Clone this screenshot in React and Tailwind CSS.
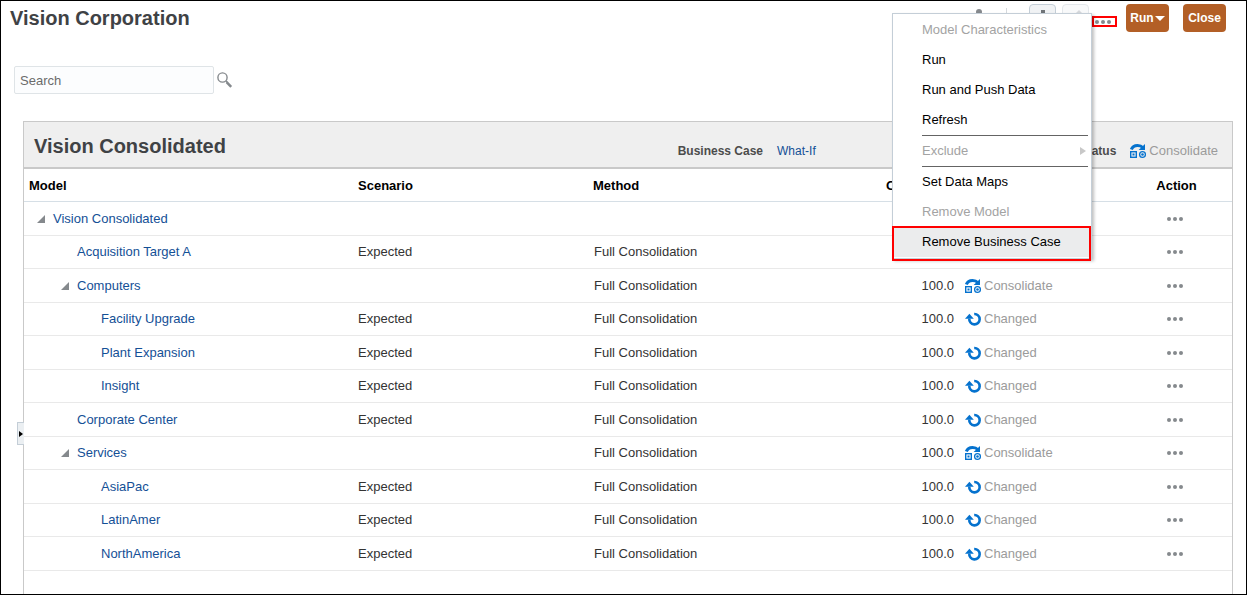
import React, { useState } from 'react';

const models = [
  { name: 'Vision Consolidated', level: 0, parent: true },
  { name: 'Acquisition Target A', level: 1, scenario: 'Expected', method: 'Full Consolidation' },
  { name: 'Computers', level: 1, parent: true, method: 'Full Consolidation', percent: '100.0', status: 'Consolidate' },
  { name: 'Facility Upgrade', level: 2, scenario: 'Expected', method: 'Full Consolidation', percent: '100.0', status: 'Changed' },
  { name: 'Plant Expansion', level: 2, scenario: 'Expected', method: 'Full Consolidation', percent: '100.0', status: 'Changed' },
  { name: 'Insight', level: 2, scenario: 'Expected', method: 'Full Consolidation', percent: '100.0', status: 'Changed' },
  { name: 'Corporate Center', level: 1, scenario: 'Expected', method: 'Full Consolidation', percent: '100.0', status: 'Changed' },
  { name: 'Services', level: 1, parent: true, method: 'Full Consolidation', percent: '100.0', status: 'Consolidate' },
  { name: 'AsiaPac', level: 2, scenario: 'Expected', method: 'Full Consolidation', percent: '100.0', status: 'Changed' },
  { name: 'LatinAmer', level: 2, scenario: 'Expected', method: 'Full Consolidation', percent: '100.0', status: 'Changed' },
  { name: 'NorthAmerica', level: 2, scenario: 'Expected', method: 'Full Consolidation', percent: '100.0', status: 'Changed' },
];

const indents = ['pl-[13px]', 'pl-[37px]', 'pl-[61px]'];

const menuItems = [
  { label: 'Model Characteristics', disabled: true },
  { label: 'Run' },
  { label: 'Run and Push Data' },
  { label: 'Refresh' },
  { label: 'Exclude', disabled: true, submenu: true, divider: true },
  { label: 'Set Data Maps', divider: true },
  { label: 'Remove Model', disabled: true },
  { label: 'Remove Business Case', highlighted: true },
];

const Dots = () => (
  <svg width="16" height="4" viewBox="0 0 16 4" fill="#85898d">
    <circle cx="2" cy="2" r="2" />
    <circle cx="8" cy="2" r="2" />
    <circle cx="14" cy="2" r="2" />
  </svg>
);

const ConsolidateIcon = () => (
  <svg width="16" height="16" viewBox="0 0 16 16" fill="none" stroke="#0572ce" className="shrink-0">
    <path d="M1.4 6.4C2.4 3.6 4.6 2.4 7.6 2.4c2.4 0 3.9.6 5 2" strokeWidth="3" />
    <path d="M15 1v6H8.6z" fill="#0572ce" stroke="none" />
    <rect x="0.7" y="8.7" width="5.6" height="5.6" strokeWidth="1.4" />
    <rect x="2.5" y="10.5" width="2" height="2" fill="#0572ce" stroke="none" />
    <circle cx="12.5" cy="11.5" r="2.9" strokeWidth="1.3" />
    <circle cx="12.5" cy="11.5" r="1.3" fill="#0572ce" stroke="none" />
  </svg>
);

const ChangedIcon = () => (
  <svg width="16" height="16" viewBox="0 0 16 16" fill="none" className="shrink-0">
    <path d="M9.2 3a5.2 5.2 0 1 1-4.9 4.6" stroke="#0572ce" strokeWidth="2.6" />
    <path d="M4.4 2.8L8.8 7.8H0z" fill="#0572ce" />
  </svg>
);

const Status = ({ value }) => (
  <span className="flex items-center gap-[3px] text-[#9b9b9b]">
    {value === 'Consolidate' ? <ConsolidateIcon /> : <ChangedIcon />}
    {value}
  </span>
);

const ActionsMenu = () => (
  <ul
    role="menu"
    className="absolute right-full -top-[3px] z-10 w-[200px] border border-[#c4ced7] bg-white pt-px pb-px shadow-[2px_2px_3px_rgba(0,0,0,0.25)]"
  >
    {menuItems.map((item) => (
      <li key={item.label} role="none" className="relative">
        {item.divider && <hr className="ml-[29px] mr-[3px] border-t border-[#646464]" />}
        <button
          type="button"
          role="menuitem"
          disabled={item.disabled}
          className={`flex h-[30px] w-full items-center justify-between pl-[29px] pr-[5px] text-left ${
            item.disabled ? 'text-[#a3a3a3]' : 'text-black'
          } ${item.highlighted ? 'bg-[#ebeced]' : ''}`}
        >
          {item.label}
          {item.submenu && (
            <svg width="6" height="8" viewBox="0 0 6 8" fill="#c8c8c8">
              <path d="M0 0l6 4-6 4z" />
            </svg>
          )}
        </button>
        {item.highlighted && (
          <span className="pointer-events-none absolute -left-px right-0 -top-px -bottom-1 border-2 border-[#ff0000]" />
        )}
      </li>
    ))}
  </ul>
);

const Toolbar = ({ menuOpen, onToggleMenu }) => (
  <div className="flex items-start">
    <button type="button" aria-label="User" className="mr-[14px] flex h-[27px] w-[27px] justify-center pt-1">
      <svg width="14" height="18" viewBox="0 0 14 18" fill="#85898d">
        <circle cx="7" cy="4" r="3" />
        <path d="M1 17c0-5 2-8 6-8s6 3 6 8z" />
      </svg>
    </button>
    <span className="mr-[22px] mt-1 h-5 w-px bg-[#d5d9dd]" />
    <button
      type="button"
      aria-label="Download"
      className="mr-[6px] flex h-[27px] w-[27px] justify-center rounded-sm border border-[#c4ced7] bg-[#f0f2f4] pt-1"
    >
      <svg width="14" height="16" viewBox="0 0 14 16" fill="#6f7478">
        <path d="M5 1h4v7h4l-6 6-6-6h4z" />
      </svg>
    </button>
    <button
      type="button"
      aria-label="Edit"
      disabled
      className="mr-[3px] flex h-[27px] w-[27px] justify-center rounded-sm border border-[#e3e7eb] bg-[#f8f9fa] pt-1"
    >
      <svg width="16" height="16" viewBox="0 0 16 16" fill="#d5d8db">
        <path d="M11 1l4 4-9 9-5 1 1-5z" />
      </svg>
    </button>
    <div className="relative mr-[9px] mt-3">
      <button
        type="button"
        aria-label="More actions"
        aria-expanded={menuOpen}
        onClick={onToggleMenu}
        className="flex h-[11px] w-[25px] items-center border-2 border-[#ff0000] pl-px"
      >
        <Dots />
      </button>
      {menuOpen && <ActionsMenu />}
    </div>
    <button
      type="button"
      className="mr-[14px] flex h-7 w-[43px] items-center justify-center gap-px rounded-sm bg-[#b35f26] text-xs font-bold text-white"
    >
      Run
      <svg width="10" height="5" viewBox="0 0 10 5" fill="currentColor">
        <path d="M0 0h10L5 5z" />
      </svg>
    </button>
    <button type="button" className="h-7 w-[43px] rounded-sm bg-[#b35f26] text-xs font-bold text-white">
      Close
    </button>
  </div>
);

const ModelTable = () => (
  <table className="w-full table-fixed border-separate border-spacing-0">
    <colgroup>
      <col />
      <col className="w-[235px]" />
      <col className="w-[236px]" />
      <col className="w-[136px]" />
      <col className="w-[162px]" />
      <col className="w-[111px]" />
    </colgroup>
    <thead>
      <tr className="h-[33px] text-left text-black [&>th]:border-b [&>th]:border-[#d6dfe6] [&>th]:pt-px">
        <th className="pl-[5px]">Model</th>
        <th className="pl-[6px]">Scenario</th>
        <th className="pl-[6px]">Method</th>
        <th className="pl-[63px]">Cons %</th>
        <th aria-label="Status" />
        <th className="text-center">Action</th>
      </tr>
    </thead>
    <tbody>
      {models.map((model) => (
        <tr
          key={model.name}
          className="odd:h-[34px] even:h-[33px] [&>td]:border-b [&>td]:border-[#e9e9e9]"
        >
          <td className={indents[model.level]}>
            <div className="flex items-center gap-2">
              {model.parent ? (
                <button type="button" aria-label={`Collapse ${model.name}`} className="w-2">
                  <svg width="8" height="8" viewBox="0 0 8 8" fill="#85898d">
                    <path d="M8 0v8H0z" />
                  </svg>
                </button>
              ) : (
                <span className="w-2" />
              )}
              <a href="#" className="text-[#145096]">
                {model.name}
              </a>
            </div>
          </td>
          <td className="pl-[6px]">{model.scenario}</td>
          <td className="pl-[7px]">{model.method}</td>
          <td className="pr-[5px] text-right">{model.percent}</td>
          <td className="pl-[6px]">{model.status && <Status value={model.status} />}</td>
          <td className="pr-[3px]">
            <button type="button" aria-label={`Actions for ${model.name}`} className="mx-auto block">
              <Dots />
            </button>
          </td>
        </tr>
      ))}
    </tbody>
  </table>
);

const App = () => {
  const [menuOpen, setMenuOpen] = useState(true);
  const [search, setSearch] = useState('');

  return (
    <div className="flex min-h-screen flex-col border border-black bg-white font-['Liberation_Sans',Arial,sans-serif] text-[13px] leading-4 text-[#333]">
      <header className="flex items-start justify-between pl-[9px] pr-5 pt-[3px]">
        <h1 className="text-xl font-bold text-[#3f4245]">Vision Corporation</h1>
        <Toolbar menuOpen={menuOpen} onToggleMenu={() => setMenuOpen(!menuOpen)} />
      </header>

      <form className="mt-[34px] flex items-center gap-[3px] pl-[13px]" onSubmit={(e) => e.preventDefault()}>
        <input
          type="text"
          aria-label="Search"
          placeholder="Search"
          value={search}
          onChange={(e) => setSearch(e.target.value)}
          className="h-7 w-[200px] rounded-xs border border-[#dfe4e7] bg-[#fcfdfe] px-[5px] placeholder:text-[#6b6b6b]"
        />
        <button type="submit" aria-label="Search models">
          <svg width="16" height="16" viewBox="0 0 16 16" fill="none" stroke="#85898d">
            <circle cx="5.5" cy="5.5" r="4.6" strokeWidth="1.4" />
            <path d="M9 9l1.5 1.5" strokeWidth="1.4" />
            <path d="M9.6 10.2l4.6 4.6" strokeWidth="2.6" />
          </svg>
        </button>
      </form>

      <main className="relative ml-[22px] mr-[13px] mt-[27px] flex-1 border border-b-0 border-[#c9c9c9]">
        <button
          type="button"
          aria-label="Expand panel"
          className="absolute right-full top-[300px] flex h-[23px] w-[7px] items-center justify-center border border-r-0 border-[#c4ced7] bg-[#ebeff2]"
        >
          <svg width="4" height="6" viewBox="0 0 4 6" fill="#000" className="shrink-0">
            <path d="M0 0l4 3-4 3z" />
          </svg>
        </button>

        <div className="flex h-[47px] items-center justify-between border-b-2 border-[#c9c9c9] bg-[#efefef] pl-[10px] pr-[14px] pt-[2px]">
          <h2 className="text-xl font-bold text-[#3f4245]">Vision Consolidated</h2>
          <div className="flex pt-[10px] text-xs leading-4">
            <div className="flex w-[402px] gap-[14px]">
              <span className="font-bold text-[#4c4c4c]">Business Case</span>
              <a href="#" className="text-[#145096]">
                What-If
              </a>
            </div>
            <div className="flex gap-[14px]">
              <span className="font-bold text-[#4c4c4c]">Status</span>
              <div className="text-[13px] leading-4">
                <Status value="Consolidate" />
              </div>
            </div>
          </div>
        </div>

        <ModelTable />
      </main>
    </div>
  );
};

export default App;
